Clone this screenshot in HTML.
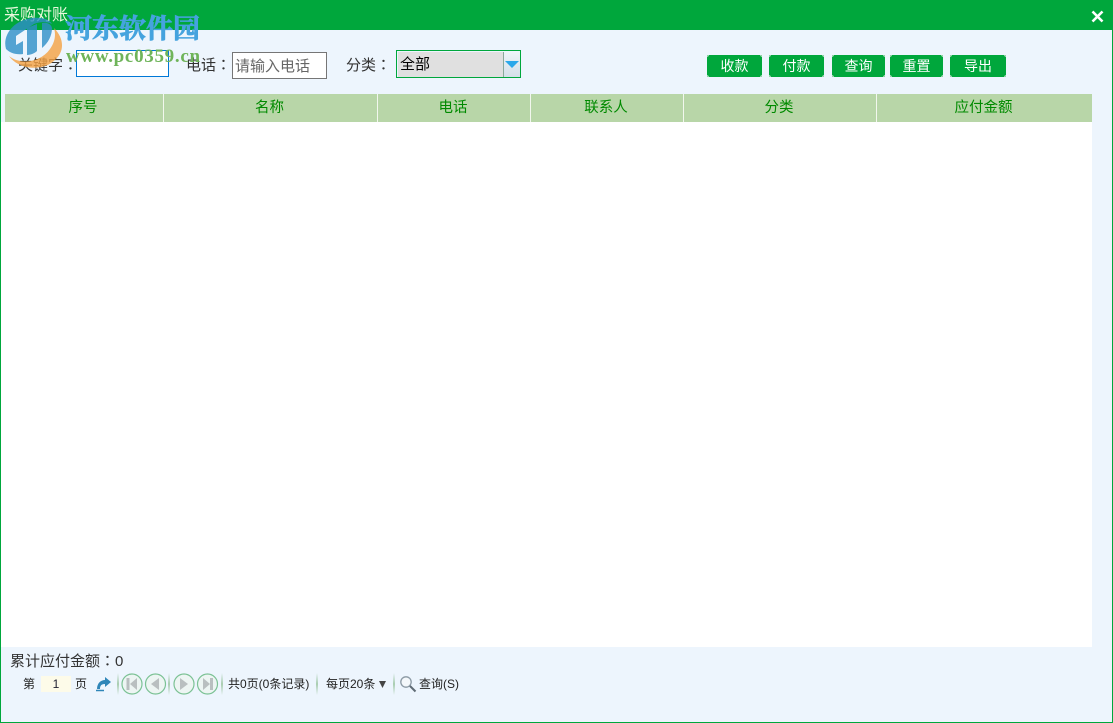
<!DOCTYPE html>
<html lang="zh-CN">
<head>
<meta charset="utf-8">
<title>采购对账</title>
<style>
*{box-sizing:border-box;margin:0;padding:0}
html,body{width:1113px;height:723px;overflow:hidden;background:#edf5fd}
body{position:relative;font-family:"Liberation Sans","Noto Sans CJK SC",sans-serif;font-size:15px;color:#333}
.a{position:absolute;white-space:nowrap}
.c{font-family:"Noto Sans CJK TC",sans-serif}
#frame{position:absolute;left:0;top:0;width:1113px;height:723px;border:1px solid #00a73c;pointer-events:none}
#bar{position:absolute;left:0;top:0;width:1113px;height:30px;background:#00a73c}
#white{position:absolute;left:1px;top:122px;width:1091px;height:525px;background:#fff}
#head{position:absolute;left:5px;top:94px;width:1087px;height:28px;background:#b8d6a8}
.th{position:absolute;top:94px;height:28px;line-height:29px;text-align:center;color:#008a00;font-size:14.500px;background:#b8d6a8;border-right:1px solid #f2f7ee;padding-right:2px}
.btn{position:absolute;top:55px;height:22px;line-height:22px;color:#fff;text-align:center;font-size:14px;background:radial-gradient(circle 2px at 0 0,#8fd4a6 99%,transparent),radial-gradient(circle 2px at 100% 0,#8fd4a6 99%,transparent),radial-gradient(circle 2px at 0 100%,#8fd4a6 99%,transparent),radial-gradient(circle 2px at 100% 100%,#8fd4a6 99%,transparent),#00a73c}
.inp{position:absolute;background:#fff}
.pg{font-size:12px;color:#222}
.sep{position:absolute;top:673px;width:2px;height:22px;background:linear-gradient(transparent,#a9cdb0,transparent)}
</style>
</head>
<body>
<div id="bar"></div>
<div id="white"></div>
<div class="a" style="left:4px;top:6px;font-size:16px;color:#e8f8dc;line-height:20px">采购对账</div>
<svg class="a" style="left:1090px;top:9px" width="15" height="15" viewBox="0 0 15 15"><path d="M2.500 2.500L12.500 12.500M12.500 2.500L2.500 12.500" stroke="#fff" stroke-width="2.600" fill="none"/></svg>

<div class="a" style="left:18px;top:55px;line-height:20px">关键字<span class="c" lang="zh-TW">：</span></div>
<div class="inp" style="left:76px;top:50px;width:93px;height:27px;border:1px solid #0078d7"></div>
<div class="a" style="left:186px;top:55px;line-height:20px">电话<span class="c" lang="zh-TW">：</span></div>
<div class="inp" style="left:232px;top:52px;width:95px;height:27px;border:1px solid #767676;padding-left:2px;line-height:27px;color:#666;font-size:15px">请输入电话</div>
<div class="a" style="left:346px;top:55px;line-height:20px">分类<span class="c" lang="zh-TW">：</span></div>
<div class="a" style="left:396px;top:50px;width:125px;height:28px;border:1px solid #00a73c;background:#edf5fd">
  <div class="a" style="left:1px;top:1px;width:106px;height:25px;background:#e0e0e0;color:#000;line-height:26px;padding-left:2px;font-size:15px">全部</div>
  <div class="a" style="left:106px;top:1px;width:17px;height:25px;background:linear-gradient(#eef4f8,#d5dfe8);border-left:1px solid #8aa99a"></div>
  <svg class="a" style="left:107px;top:9px" width="16" height="9" viewBox="0 0 16 9"><path d="M1 1H15L8 8Z" fill="#2ba8ea"/></svg>
</div>

<div class="btn" style="left:707px;width:55px">收款</div>
<div class="btn" style="left:769px;width:55px">付款</div>
<div class="btn" style="left:832px;width:53px">查询</div>
<div class="btn" style="left:890px;width:53px">重置</div>
<div class="btn" style="left:950px;width:56px">导出</div>

<div id="head"></div>
<div class="th" style="left:5px;width:159px">序号</div>
<div class="th" style="left:164px;width:214px">名称</div>
<div class="th" style="left:378px;width:153px">电话</div>
<div class="th" style="left:531px;width:153px">联系人</div>
<div class="th" style="left:684px;width:193px">分类</div>
<div class="th" style="left:877px;width:215px;border-right:0">应付金额</div>

<!-- watermark -->
<svg class="a" style="left:4px;top:15px;opacity:.8" width="60" height="54" viewBox="0 0 60 54">
  <path d="M5 41C16 50 36 48 46 34C51 27 52 20 50 13C60 23 61 36 51 45C40 56 16 56 5 41Z" fill="#f5a242"/>
  <path d="M2 34C-2 20 10 5 28 3C38 2 45 4 48 9C42 6 35 7 30 9L27 11L12 21L12 30L19 26L19 39C12 40 6 38 2 34Z" fill="#2f8fc8"/>
  <path d="M23 40L23 13L33 9L33 36C31 38 27 40 23 40Z" fill="#2f8fc8"/>
  <path d="M38 8C43 7 47 9 48 13C48 21 44 28 38 33Z" fill="#2f8fc8"/>
</svg>
<div class="a" style="left:65px;top:12px;font-family:'Liberation Serif','Noto Serif CJK SC',serif;font-weight:700;font-size:27px;line-height:34px;color:#45a3de;-webkit-text-stroke:.7px #45a3de">河东软件园</div>
<div class="a" style="left:66px;top:47px;font-family:'Liberation Serif',serif;font-weight:700;font-size:19px;line-height:20px;letter-spacing:.7px;color:#6fb45a">www.pc0359.cn</div>

<!-- footer -->
<div class="a" style="left:10px;top:651px;line-height:20px;font-size:15px">累计应付金额<span class="c" lang="zh-TW">：</span>0</div>
<div class="a pg" style="left:23px;top:675px;line-height:18px">第</div>
<div class="a" style="left:41px;top:676px;width:30px;height:16px;background:#fdfbe9;text-align:center;font-size:12px;line-height:16px;color:#223">1</div>
<div class="a pg" style="left:75px;top:675px;line-height:18px">页</div>
<svg class="a" style="left:95px;top:675px" width="17" height="18" viewBox="0 0 17 18">
  <path d="M2 14C2 8 6 5 10 5V2L16 7L10 12V9C6 9 5 11 5 14Z" fill="#2f86b8"/>
  <path d="M1 15.500H9" stroke="#2f86b8" stroke-width="1.500"/>
</svg>
<div class="sep" style="left:117px"></div>
<svg class="a" style="left:120px;top:672px" width="100" height="24" viewBox="0 0 100 24" fill="none">
  <g stroke="#7cc295" stroke-width="1.200" fill="#edf5f3">
    <circle cx="12" cy="12" r="10"/><circle cx="35.500" cy="12" r="10"/><circle cx="64" cy="12" r="10"/><circle cx="87.500" cy="12" r="10"/>
  </g>
  <g fill="#b9bfc0">
    <rect x="6.500" y="6" width="3" height="12"/><path d="M17 6V18L10 12Z"/>
    <path d="M39 6V18L31 12Z"/>
    <path d="M60 6V18L68 12Z"/>
    <path d="M83 6V18L90 12Z"/><rect x="90" y="6" width="3" height="12"/>
  </g>
</svg>
<div class="sep" style="left:168px"></div>
<div class="sep" style="left:221px"></div>
<div class="a pg" style="left:228px;top:675px;line-height:18px">共0页(0条记录)</div>
<div class="sep" style="left:316px"></div>
<div class="a pg" style="left:326px;top:675px;line-height:18px">每页20条</div>
<svg class="a" style="left:378px;top:680px" width="9" height="9" viewBox="0 0 9 9"><path d="M1 1H8L4.500 8Z" fill="#444"/></svg>
<div class="sep" style="left:393px"></div>
<svg class="a" style="left:399px;top:675px" width="18" height="18" viewBox="0 0 18 18" fill="none">
  <circle cx="7" cy="7" r="5.200" stroke="#8c9aa5" stroke-width="1.300" fill="#f4f8fb"/>
  <path d="M11 11L16.500 16.500" stroke="#5f6b75" stroke-width="2"/>
</svg>
<div class="a pg" style="left:419px;top:675px;line-height:18px">查询(S)</div>

<div id="frame"></div>
</body>
</html>
